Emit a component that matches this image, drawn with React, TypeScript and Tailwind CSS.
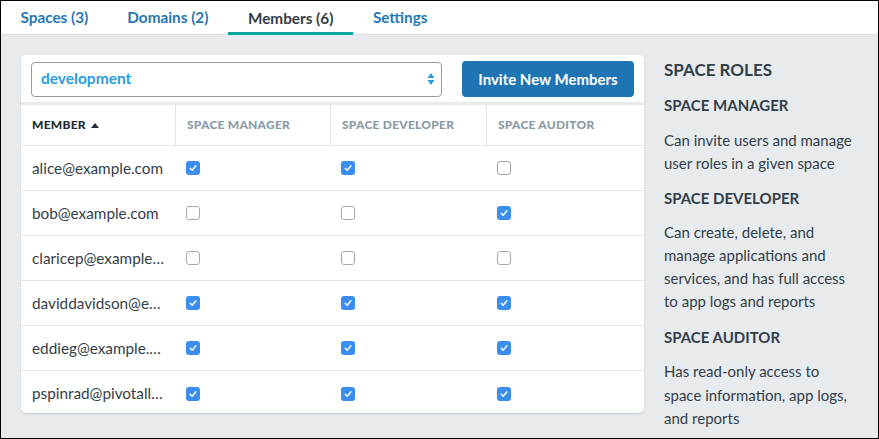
import React from "react";

const members: { email: string; roles: [boolean, boolean, boolean] }[] = [
  { email: "alice@example.com", roles: [true, true, false] },
  { email: "bob@example.com", roles: [false, false, true] },
  { email: "claricep@example.com", roles: [false, false, false] },
  { email: "daviddavidson@example.com", roles: [true, true, true] },
  { email: "eddieg@example.com", roles: [true, true, true] },
  { email: "pspinrad@pivotallabs.com", roles: [true, true, true] },
];

function Check({ on }: { on: boolean }) {
  if (on) {
    return (
      <span className="flex h-[14px] w-[14px] items-center justify-center rounded-[3px] bg-[#3a8ef0]">
        <svg width="10" height="10" viewBox="0 0 10 10" fill="none">
          <path d="M2.2 5.2 L4.2 7.2 L7.9 2.8" stroke="white" strokeWidth="1.4" strokeLinecap="round" strokeLinejoin="round" />
        </svg>
      </span>
    );
  }
  return <span className="block h-[14px] w-[14px] rounded-[3px] border border-[#a9a9a9] bg-white" />;
}

export default function App() {
  const font = { fontFamily: "Lato, 'Noto Sans', sans-serif" };
  return (
    <div className="flex h-[439px] w-[879px] flex-col border border-black bg-[#e8ebee] text-[#333e48]" style={font}>
      <div className="flex h-[34px] shrink-0 border-b border-[#d8dde2] bg-white">
        {["Spaces (3)", "Domains (2)", "Members (6)", "Settings"].map((t, i) => (
          <div
            key={t}
            className={
              i === 2
                ? "-mb-px flex items-center border-b-[3px] border-[#00a99b] px-[20px] pt-[3px] text-[15.3px] font-bold text-[#333e48]"
                : "flex items-center px-[19.5px] text-[15.3px] font-bold text-[#1f77b8]"
            }
          >
            {t}
          </div>
        ))}
      </div>
      <div className="flex flex-1 gap-[20px] pl-[20px] pt-[20px]">
        <div className="h-[358px] w-[623px] overflow-hidden rounded-[5px] bg-white shadow-[0_1px_2px_rgba(0,0,0,0.15)]">
          <div className="flex h-[50px] items-center gap-[20px] border-b-[3px] border-[#e8ebee] pl-[10px] pr-[10px] pt-[1px]">
            <div className="flex h-[35px] w-[411px] items-center justify-between rounded-[4px] border border-[#9a9a9a] pl-[9px] pr-[6px] text-[15.5px] font-bold text-[#2a9be0]">
              <span>development</span>
              <svg width="8" height="14" viewBox="0 0 8 14">
                <path d="M4 1 L7.5 6 L0.5 6 Z" fill="#2a9be0" />
                <path d="M4 13 L7.5 8 L0.5 8 Z" fill="#2a9be0" />
              </svg>
            </div>
            <div className="flex h-[36px] w-[172px] items-center justify-center rounded-[4px] bg-[#1f75b3] text-[15px] font-bold text-white">
              Invite New Members
            </div>
          </div>
          <div className="grid h-[41px] grid-cols-[155px_155px_156px_157px] border-b border-[#e1e5e9] text-[12px] font-black tracking-[0.02em]">
            <div className="flex items-center gap-[5px] border-r border-[#e1e5e9] pl-[11px] text-[#212b33]">
              MEMBER
              <svg width="8" height="5" viewBox="0 0 8 5">
                <path d="M4 0 L8 5 L0 5 Z" fill="#212b33" />
              </svg>
            </div>
            <div className="flex items-center border-r border-[#e1e5e9] pl-[11px] text-[#8a9aa6]">SPACE MANAGER</div>
            <div className="flex items-center border-r border-[#e1e5e9] pl-[11px] text-[#8a9aa6]">SPACE DEVELOPER</div>
            <div className="flex items-center pl-[11px] text-[#8a9aa6]">SPACE AUDITOR</div>
          </div>
          {members.map((m, idx) => (
            <div
              key={m.email}
              className={
                "grid h-[45px] grid-cols-[155px_155px_156px_157px] " +
                (idx < members.length - 1 ? "border-b border-[#e1e5e9]" : "")
              }
            >
              <div className="flex min-w-0 items-center pl-[11px] pr-[10px] text-[15.3px] text-[#333e48]">
                <span className="truncate">{m.email}</span>
              </div>
              {m.roles.map((r, j) => (
                <div key={j} className="flex items-center pl-[10px]">
                  <Check on={r} />
                </div>
              ))}
            </div>
          ))}
        </div>
        <div className="w-[196px] pt-[4px] text-[#333e48]">
          <div className="text-[17px] font-bold leading-[22px]">SPACE ROLES</div>
          <div className="mt-[14px] text-[15px] font-bold leading-[20px]">SPACE MANAGER</div>
          <div className="mt-[13.5px] text-[15px] leading-[23px]">Can invite users and manage user roles in a given space</div>
          <div className="mt-[13px] text-[15px] font-bold leading-[20px]">SPACE DEVELOPER</div>
          <div className="mt-[13px] text-[15px] leading-[23.3px]">
            Can create, delete, and manage applications and services, and has full access to app logs and reports
          </div>
          <div className="mt-[13.5px] text-[15px] font-bold leading-[20px]">SPACE AUDITOR</div>
          <div className="mt-[13px] text-[15px] leading-[23.5px]">Has read-only access to space information, app logs, and reports</div>
        </div>
      </div>
    </div>
  );
}
